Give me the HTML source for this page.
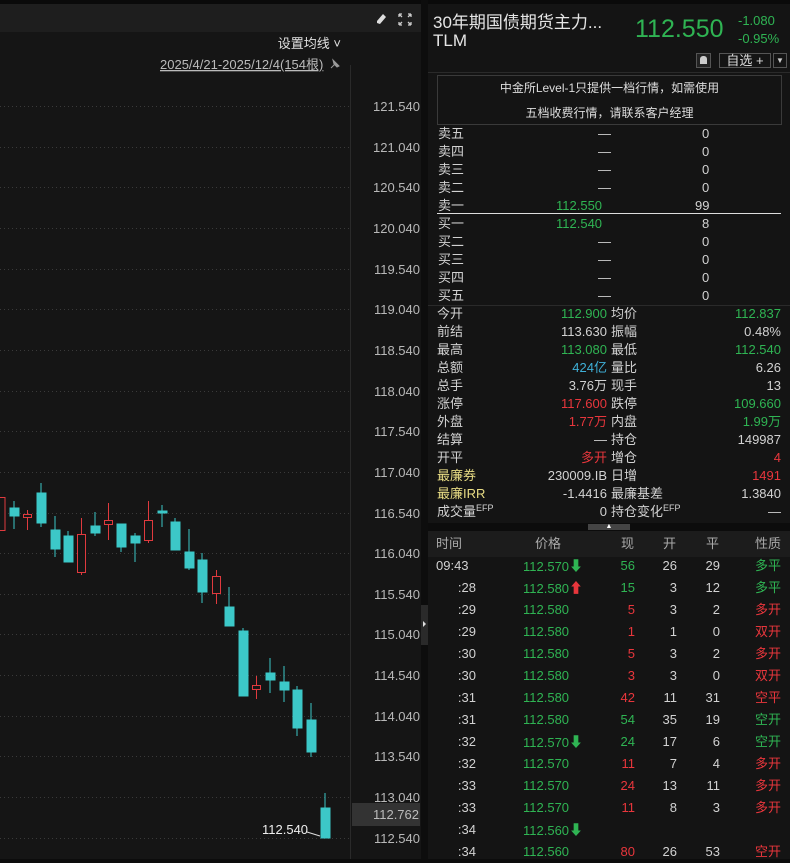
<!DOCTYPE html>
<html><head><meta charset="utf-8"><style>
*{margin:0;padding:0;box-sizing:border-box}
body{width:790px;height:859px;background:#0c0c0c;overflow:hidden;font-family:"Liberation Sans","Noto Sans CJK SC",sans-serif;color:#d2d2d2;position:relative}
.a{position:absolute;white-space:nowrap}
.g{color:#2fb453}.r{color:#e8363c}.w{color:#d2d2d2}
#right{position:absolute;left:428px;top:0;width:362px;height:859px;background:#141414}
.row{position:absolute;left:0;width:362px;height:18px;font-size:13px;line-height:18px}
.row span{position:absolute}
.t{position:absolute;left:0;width:362px;height:22px;font-size:13px;line-height:22px}
.t span{position:absolute}
.row .sp{font-size:9px;position:relative;top:-5px;line-height:0}
</style></head><body>
<svg class="a" style="left:0;top:0" width="428" height="859">
<rect x="0" y="0" width="428" height="859" fill="#151515"/>
<rect x="0" y="0" width="428" height="4" fill="#0a0a0a"/>
<rect x="0" y="4" width="421" height="28" fill="#1e1e1e"/>
<rect x="421" y="0" width="7" height="859" fill="#0d0d0d"/>
<rect x="421" y="605" width="7" height="40" fill="#2a2a2a"/>
<path d="M423 621 l3 3 l-3 3z" fill="#ddd"/>
<line x1="350.5" y1="65" x2="350.5" y2="859" stroke="#2a2a2a"/>
<g stroke="#3a3a3a" stroke-dasharray="1 3">
<line x1="0" y1="106.5" x2="350" y2="106.5"/><line x1="0" y1="147.5" x2="350" y2="147.5"/><line x1="0" y1="187.5" x2="350" y2="187.5"/><line x1="0" y1="228.5" x2="350" y2="228.5"/><line x1="0" y1="269.5" x2="350" y2="269.5"/><line x1="0" y1="309.5" x2="350" y2="309.5"/><line x1="0" y1="350.5" x2="350" y2="350.5"/><line x1="0" y1="391.5" x2="350" y2="391.5"/><line x1="0" y1="431.5" x2="350" y2="431.5"/><line x1="0" y1="472.5" x2="350" y2="472.5"/><line x1="0" y1="513.5" x2="350" y2="513.5"/><line x1="0" y1="553.5" x2="350" y2="553.5"/><line x1="0" y1="594.5" x2="350" y2="594.5"/><line x1="0" y1="634.5" x2="350" y2="634.5"/><line x1="0" y1="675.5" x2="350" y2="675.5"/><line x1="0" y1="716.5" x2="350" y2="716.5"/><line x1="0" y1="756.5" x2="350" y2="756.5"/><line x1="0" y1="797.5" x2="350" y2="797.5"/><line x1="0" y1="838.5" x2="350" y2="838.5"/>
</g>
<g font-size="13" fill="#b8b8b8" font-family="Liberation Sans,sans-serif" text-anchor="end">
<text x="420" y="111">121.540</text><text x="420" y="152">121.040</text><text x="420" y="192">120.540</text><text x="420" y="233">120.040</text><text x="420" y="274">119.540</text><text x="420" y="314">119.040</text><text x="420" y="355">118.540</text><text x="420" y="396">118.040</text><text x="420" y="436">117.540</text><text x="420" y="477">117.040</text><text x="420" y="518">116.540</text><text x="420" y="558">116.040</text><text x="420" y="599">115.540</text><text x="420" y="639">115.040</text><text x="420" y="680">114.540</text><text x="420" y="721">114.040</text><text x="420" y="761">113.540</text><text x="420" y="802">113.040</text><text x="420" y="843">112.540</text>
</g>
<rect x="352" y="803" width="68" height="23" fill="#333"/>
<text x="419" y="819" font-size="13" fill="#bbb" text-anchor="end" font-family="Liberation Sans,sans-serif">112.762</text>
<g stroke="#3cc8c8" fill="#3cc8c8">
<line x1="14" y1="501" x2="14" y2="529"/><rect x="10" y="508" width="9" height="8"/>
<line x1="41" y1="483" x2="41" y2="527"/><rect x="37" y="493" width="9" height="30"/>
<line x1="55" y1="516" x2="55" y2="557"/><rect x="51" y="530" width="9" height="19"/>
<line x1="68" y1="531" x2="68" y2="562"/><rect x="64" y="536" width="9" height="26"/>
<line x1="95" y1="512" x2="95" y2="536"/><rect x="91" y="526" width="9" height="7"/>
<line x1="121" y1="524" x2="121" y2="552"/><rect x="117" y="524" width="9" height="23"/>
<line x1="135" y1="533" x2="135" y2="562"/><rect x="131" y="536" width="9" height="7"/>
<line x1="162" y1="505" x2="162" y2="527"/><rect x="158" y="511" width="9" height="2"/>
<line x1="175" y1="518" x2="175" y2="550"/><rect x="171" y="522" width="9" height="28"/>
<line x1="189" y1="529" x2="189" y2="570"/><rect x="185" y="552" width="9" height="16"/>
<line x1="202" y1="553" x2="202" y2="603"/><rect x="198" y="560" width="9" height="32"/>
<line x1="229" y1="587" x2="229" y2="626"/><rect x="225" y="607" width="9" height="19"/>
<line x1="243" y1="628" x2="243" y2="696"/><rect x="239" y="631" width="9" height="65"/>
<line x1="270" y1="658" x2="270" y2="693"/><rect x="266" y="673" width="9" height="7"/>
<line x1="284" y1="666" x2="284" y2="702"/><rect x="280" y="682" width="9" height="8"/>
<line x1="297" y1="686" x2="297" y2="736"/><rect x="293" y="690" width="9" height="38"/>
<line x1="311" y1="703" x2="311" y2="757"/><rect x="307" y="720" width="9" height="32"/>
<line x1="325" y1="793" x2="325" y2="838"/><rect x="321" y="808" width="9" height="30"/>
</g>
<g stroke="#e03a3e" fill="#151515">
<rect x="-3" y="497.5" width="8" height="33"/>
<line x1="27.5" y1="510" x2="27.5" y2="530"/><rect x="23.5" y="514.5" width="8" height="3"/>
<line x1="81.5" y1="518" x2="81.5" y2="575"/><rect x="77.5" y="534.5" width="8" height="38"/>
<line x1="108.5" y1="503" x2="108.5" y2="540"/><rect x="104.5" y="520.5" width="8" height="4"/>
<line x1="148.5" y1="501" x2="148.5" y2="543"/><rect x="144.5" y="520.5" width="8" height="20"/>
<line x1="216.5" y1="570" x2="216.5" y2="604"/><rect x="212.5" y="576.5" width="8" height="17"/>
<line x1="256.5" y1="676" x2="256.5" y2="699"/><rect x="252.5" y="685.5" width="8" height="4"/>
</g>
<text x="262" y="834" font-size="13" fill="#eee" font-family="Liberation Sans,sans-serif">112.540</text>
<path d="M307 832 L320 836" stroke="#ddd" stroke-width="1"/>
<g stroke="#ccc" stroke-width="1.3" fill="none">
<path d="M399 14 l3 0 M399 14 l0 3 M411 14 l-3 0 M411 14 l0 3 M399 25 l3 0 M399 25 l0 -3 M411 25 l-3 0 M411 25 l0 -3 M399 14 l3 3 M411 14 l-3 3 M399 25 l3 -3 M411 25 l-3 -3"/>
</g>
<path d="M383 14 l3 3 l-6 7 l-3 -1 l0 -2z" fill="#ddd"/>
<text x="341" y="48" font-size="13" fill="#e0e0e0" text-anchor="end" font-family="Liberation Sans,Noto Sans CJK SC,sans-serif">设置均线 ˅</text>
<text x="160" y="69" font-size="13" fill="#bbb" text-decoration="underline" font-family="Liberation Sans,Noto Sans CJK SC,sans-serif">2025/4/21-2025/12/4(154根)</text>
<path d="M331 68 l5 -5 M333 60 l6 6 l-2 1 l-3 -3z" stroke="#999" fill="#999"/>
</svg>

<div id="right">
<div class="a" style="left:0;top:0;width:362px;height:4px;background:#0a0a0a"></div>
<div class="a" style="left:5px;top:8px;font-size:17px;color:#e6e6e6">30年期国债期货主力...</div>
<div class="a" style="left:5px;top:31px;font-size:17px;color:#e6e6e6">TLM</div>
<div class="a g" style="left:207px;top:15px;font-size:25px;color:#2fb453">112.550</div>
<div class="a g" style="left:310px;top:13px;font-size:13px">-1.080</div>
<div class="a g" style="left:310px;top:31px;font-size:13px">-0.95%</div>
<div class="a" style="left:268px;top:53px;width:15px;height:15px;border:1px solid #555;background:#222"><div style="margin:2px auto;width:7px;height:8px;background:#ccc;border-radius:3px 3px 0 0"></div></div>
<div class="a" style="left:291px;top:53px;width:52px;height:15px;border:1px solid #555;font-size:13px;line-height:13px;text-align:center;color:#ddd">自选 +</div>
<div class="a" style="left:345px;top:53px;width:14px;height:15px;border:1px solid #555;font-size:8px;text-align:center;line-height:13px;color:#ccc">▼</div>
<div class="a" style="left:0;top:72px;width:362px;height:1px;background:#2a2a2a"></div>
<div class="a" style="left:9px;top:75px;width:345px;height:50px;border:1px solid #3a3a3a;font-size:12px;text-align:center;line-height:25px;color:#ddd">中金所Level-1只提供一档行情，如需使用<br>五档收费行情，请联系客户经理</div>

<div class="row" style="top:125px"><span style="left:10px">卖五</span><span style="left:170px">—</span><span style="left:274px">0</span></div>
<div class="row" style="top:143px"><span style="left:10px">卖四</span><span style="left:170px">—</span><span style="left:274px">0</span></div>
<div class="row" style="top:161px"><span style="left:10px">卖三</span><span style="left:170px">—</span><span style="left:274px">0</span></div>
<div class="row" style="top:179px"><span style="left:10px">卖二</span><span style="left:170px">—</span><span style="left:274px">0</span></div>
<div class="row" style="top:197px"><span style="left:10px">卖一</span><span class="g" style="left:128px">112.550</span><span style="left:267px">99</span></div>
<div class="a" style="left:9px;top:213px;width:344px;height:1px;background:#ddd"></div>
<div class="row" style="top:215px"><span style="left:10px">买一</span><span class="g" style="left:128px">112.540</span><span style="left:274px">8</span></div>
<div class="row" style="top:233px"><span style="left:10px">买二</span><span style="left:170px">—</span><span style="left:274px">0</span></div>
<div class="row" style="top:251px"><span style="left:10px">买三</span><span style="left:170px">—</span><span style="left:274px">0</span></div>
<div class="row" style="top:269px"><span style="left:10px">买四</span><span style="left:170px">—</span><span style="left:274px">0</span></div>
<div class="row" style="top:287px"><span style="left:10px">买五</span><span style="left:170px">—</span><span style="left:274px">0</span></div>
<div class="a" style="left:0;top:305px;width:362px;height:1px;background:#2a2a2a"></div>

<div class="row" style="top:305px"><span style="left:9px">今开</span><span class="g" style="right:183px">112.900</span><span style="left:183px">均价</span><span class="g" style="right:9px">112.837</span></div>
<div class="row" style="top:323px"><span style="left:9px">前结</span><span style="right:183px">113.630</span><span style="left:183px">振幅</span><span style="right:9px">0.48%</span></div>
<div class="row" style="top:341px"><span style="left:9px">最高</span><span class="g" style="right:183px">113.080</span><span style="left:183px">最低</span><span class="g" style="right:9px">112.540</span></div>
<div class="row" style="top:359px"><span style="left:9px">总额</span><span style="right:183px;color:#3fb0d8">424亿</span><span style="left:183px">量比</span><span style="right:9px">6.26</span></div>
<div class="row" style="top:377px"><span style="left:9px">总手</span><span style="right:183px">3.76万</span><span style="left:183px">现手</span><span style="right:9px">13</span></div>
<div class="row" style="top:395px"><span style="left:9px">涨停</span><span class="r" style="right:183px">117.600</span><span style="left:183px">跌停</span><span class="g" style="right:9px">109.660</span></div>
<div class="row" style="top:413px"><span style="left:9px">外盘</span><span class="r" style="right:183px">1.77万</span><span style="left:183px">内盘</span><span class="g" style="right:9px">1.99万</span></div>
<div class="row" style="top:431px"><span style="left:9px">结算</span><span style="right:183px">—</span><span style="left:183px">持仓</span><span style="right:9px">149987</span></div>
<div class="row" style="top:449px"><span style="left:9px">开平</span><span class="r" style="right:183px">多开</span><span style="left:183px">增仓</span><span class="r" style="right:9px">4</span></div>
<div class="row" style="top:467px"><span style="left:9px;color:#e8dc84">最廉券</span><span style="right:183px">230009.IB</span><span style="left:183px">日增</span><span class="r" style="right:9px">1491</span></div>
<div class="row" style="top:485px"><span style="left:9px;color:#e8dc84">最廉IRR</span><span style="right:183px">-1.4416</span><span style="left:183px">最廉基差</span><span style="right:9px">1.3840</span></div>
<div class="row" style="top:503px"><span style="left:9px">成交量<span class="sp">EFP</span></span><span style="right:183px">0</span><span style="left:183px">持仓变化<span class="sp">EFP</span></span><span style="right:9px">—</span></div>
<div class="a" style="left:0;top:523px;width:362px;height:8px;background:#0c0c0c"></div>
<div class="a" style="left:160px;top:524px;width:42px;height:6px;background:#444;font-size:7px;line-height:6px;text-align:center;color:#fff">▲</div>
<div class="a" style="left:0;top:531px;width:362px;height:26px;background:#1c1c1c"></div>
<div class="t" style="top:533px;color:#aaa"><span style="left:8px">时间</span><span style="left:107px">价格</span><span style="left:193px">现</span><span style="left:235px">开</span><span style="left:278px">平</span><span style="right:9px">性质</span></div>

<div class="t" style="top:555px"><span style="left:8px">09:43</span><span class="g" style="left:95px">112.570<b style="font-size:14px">⬇</b></span><span class="g" style="right:155px">56</span><span style="right:113px">26</span><span style="right:70px">29</span><span class="g" style="right:9px">多平</span></div>
<div class="t" style="top:577px"><span style="left:8px;width:40px;text-align:right">:28</span><span class="g" style="left:95px">112.580<b class="r" style="font-size:14px">⬆</b></span><span class="g" style="right:155px">15</span><span style="right:113px">3</span><span style="right:70px">12</span><span class="g" style="right:9px">多平</span></div>
<div class="t" style="top:599px"><span style="left:8px;width:40px;text-align:right">:29</span><span class="g" style="left:95px">112.580</span><span class="r" style="right:155px">5</span><span style="right:113px">3</span><span style="right:70px">2</span><span class="r" style="right:9px">多开</span></div>
<div class="t" style="top:621px"><span style="left:8px;width:40px;text-align:right">:29</span><span class="g" style="left:95px">112.580</span><span class="r" style="right:155px">1</span><span style="right:113px">1</span><span style="right:70px">0</span><span class="r" style="right:9px">双开</span></div>
<div class="t" style="top:643px"><span style="left:8px;width:40px;text-align:right">:30</span><span class="g" style="left:95px">112.580</span><span class="r" style="right:155px">5</span><span style="right:113px">3</span><span style="right:70px">2</span><span class="r" style="right:9px">多开</span></div>
<div class="t" style="top:665px"><span style="left:8px;width:40px;text-align:right">:30</span><span class="g" style="left:95px">112.580</span><span class="r" style="right:155px">3</span><span style="right:113px">3</span><span style="right:70px">0</span><span class="r" style="right:9px">双开</span></div>
<div class="t" style="top:687px"><span style="left:8px;width:40px;text-align:right">:31</span><span class="g" style="left:95px">112.580</span><span class="r" style="right:155px">42</span><span style="right:113px">11</span><span style="right:70px">31</span><span class="r" style="right:9px">空平</span></div>
<div class="t" style="top:709px"><span style="left:8px;width:40px;text-align:right">:31</span><span class="g" style="left:95px">112.580</span><span class="g" style="right:155px">54</span><span style="right:113px">35</span><span style="right:70px">19</span><span class="g" style="right:9px">空开</span></div>
<div class="t" style="top:731px"><span style="left:8px;width:40px;text-align:right">:32</span><span class="g" style="left:95px">112.570<b style="font-size:14px">⬇</b></span><span class="g" style="right:155px">24</span><span style="right:113px">17</span><span style="right:70px">6</span><span class="g" style="right:9px">空开</span></div>
<div class="t" style="top:753px"><span style="left:8px;width:40px;text-align:right">:32</span><span class="g" style="left:95px">112.570</span><span class="r" style="right:155px">11</span><span style="right:113px">7</span><span style="right:70px">4</span><span class="r" style="right:9px">多开</span></div>
<div class="t" style="top:775px"><span style="left:8px;width:40px;text-align:right">:33</span><span class="g" style="left:95px">112.570</span><span class="r" style="right:155px">24</span><span style="right:113px">13</span><span style="right:70px">11</span><span class="r" style="right:9px">多开</span></div>
<div class="t" style="top:797px"><span style="left:8px;width:40px;text-align:right">:33</span><span class="g" style="left:95px">112.570</span><span class="r" style="right:155px">11</span><span style="right:113px">8</span><span style="right:70px">3</span><span class="r" style="right:9px">多开</span></div>
<div class="t" style="top:819px"><span style="left:8px;width:40px;text-align:right">:34</span><span class="g" style="left:95px">112.560<b style="font-size:14px">⬇</b></span></div>
<div class="t" style="top:841px"><span style="left:8px;width:40px;text-align:right">:34</span><span class="g" style="left:95px">112.560</span><span class="r" style="right:155px">80</span><span style="right:113px">26</span><span style="right:70px">53</span><span class="r" style="right:9px">空开</span></div>
</div>
</body></html>
